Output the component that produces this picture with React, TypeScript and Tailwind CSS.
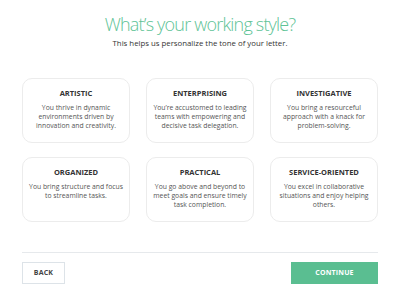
const cards = [
  { title: 'ARTISTIC', body: 'You thrive in dynamic environments driven by innovation and creativity.' },
  { title: 'ENTERPRISING', body: 'You’re accustomed to leading teams with empowering and decisive task delegation.' },
  { title: 'INVESTIGATIVE', body: 'You bring a resourceful approach with a knack for problem-solving.' },
  { title: 'ORGANIZED', body: 'You bring structure and focus to streamline tasks.' },
  { title: 'PRACTICAL', body: 'You go above and beyond to meet goals and ensure timely task completion.' },
  { title: 'SERVICE-ORIENTED', body: 'You excel in collaborative situations and enjoy helping others.' },
]

export default function App() {
  return (
    <div className="w-[400px] h-[296px] bg-white font-['Open_Sans',sans-serif] overflow-hidden">
      {/* Header */}
      <div className="pt-[12px] text-center">
        <h1 className="text-[18px] leading-[24px] font-light tracking-[-0.8px] text-[#5ec396]">
          What’s your working style?
        </h1>
        <p className="mt-[1px] text-[7.8px] leading-[12px] text-[#333]">This helps us personalize the tone of your letter.</p>
      </div>

      {/* Cards */}
      <div className="mx-[22px] mt-[29px] grid grid-cols-3 gap-x-[16px] gap-y-[14px]">
        {cards.map((c) => (
          <div
            key={c.title}
            className="h-[65px] rounded-[10px] border border-[#ececec] px-[6px] pt-[8.5px] text-center"
          >
            <div className="text-[7.5px] leading-[10px] font-bold text-[#333]">{c.title}</div>
            <p className="mt-[5.5px] text-[6.8px] leading-[9px] text-[#555]">{c.body}</p>
          </div>
        ))}
      </div>

      {/* Footer */}
      <div className="mx-[22px] mt-[30px] border-t border-[#e6e9ec]" />
      <div className="mx-[22px] mt-[9px] flex justify-between">
        <button className="w-[43px] h-[22px] border border-[#dde3e8] text-[7px] font-bold text-[#444] tracking-wide">
          BACK
        </button>
        <button className="w-[87px] h-[22px] bg-[#5abe91] text-[7px] font-bold text-white tracking-wide">
          CONTINUE
        </button>
      </div>
    </div>
  )
}
